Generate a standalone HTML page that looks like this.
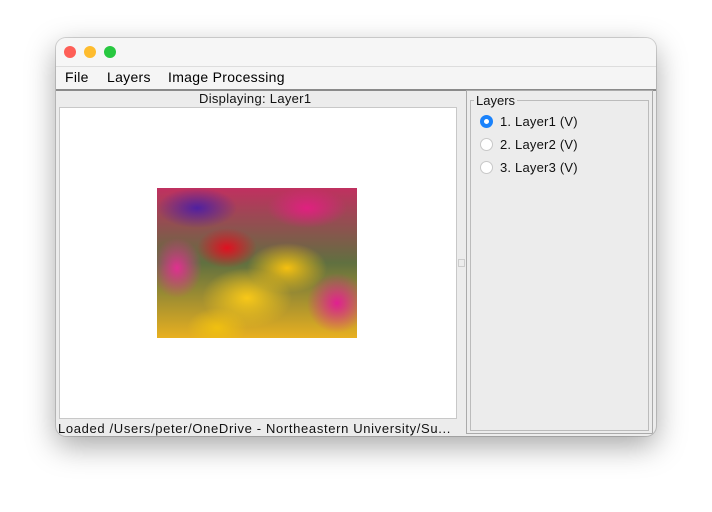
<!DOCTYPE html>
<html><head><style>
body{margin:0;width:712px;height:512px;background:#fff;font-family:"Liberation Sans",sans-serif;position:relative;overflow:hidden}
.win{position:absolute;left:56px;top:38px;width:600px;height:398px;border-radius:10px;background:#ececec;box-shadow:0 10px 30px rgba(0,0,0,.35),0 0 0 1px rgba(0,0,0,.15);overflow:hidden}
.title{position:absolute;left:0;top:0;width:600px;height:28px;background:#f6f6f6}
.dot{position:absolute;top:8px;width:12px;height:12px;border-radius:50%}
.menu{position:absolute;top:28px;left:0;width:600px;height:22px;background:#f5f5f5;border-top:1px solid #ddd;border-bottom:2px solid #8a8a8a;font-size:14px;letter-spacing:.3px}
.menu span{position:absolute;top:2px}
.t{position:absolute;font-size:13px;color:#111;white-space:nowrap}
.img{position:absolute;left:101px;top:150px;width:200px;height:150px;background:
radial-gradient(ellipse 30px 20px at 70px 60px,#e01020,transparent),
radial-gradient(ellipse 40px 25px at 130px 80px,#f5c010,transparent),
radial-gradient(ellipse 45px 30px at 90px 110px,#f8c818,transparent),
radial-gradient(ellipse 30px 30px at 180px 115px,#e02090,transparent),
radial-gradient(ellipse 25px 30px at 20px 80px,#e03090,transparent),
radial-gradient(ellipse 40px 20px at 150px 20px,#e02080,transparent),
radial-gradient(ellipse 40px 20px at 40px 20px,#5020a0,transparent),
radial-gradient(ellipse 30px 20px at 60px 140px,#f0c010,transparent),
linear-gradient(#c03060,#607040 50%,#e8b020)}
.radio{position:absolute;left:424px;width:13px;height:13px;border-radius:50%;background:#fff;border:1px solid #c8c8c8;box-sizing:border-box}
</style></head><body>
<div class="win">
<div class="title"></div>
<div class="dot" style="left:8px;background:#fe5f57"></div>
<div class="dot" style="left:28px;background:#febc2e"></div>
<div class="dot" style="left:48px;background:#28c840"></div>
<div class="menu"><span style="left:9px">File</span><span style="left:51px">Layers</span><span style="left:112px">Image Processing</span></div>
<div class="t" style="left:143px;top:53px;letter-spacing:.3px">Displaying: Layer1</div>
<div style="position:absolute;left:3px;top:69px;width:396px;height:310px;background:#fff;border:1px solid #c8c8c8"></div>
<div class="img"></div>
<div class="t" style="left:2px;top:383px;letter-spacing:.65px">Loaded /Users/peter/OneDrive - Northeastern University/Su...</div>
<div style="position:absolute;left:402px;top:221px;width:5px;height:6px;border:1px solid #ccc"></div>
<div style="position:absolute;left:410px;top:52px;width:187px;height:344px;border:1px solid #aaa;box-sizing:border-box"></div>
<div style="position:absolute;left:414px;top:62px;width:179px;height:331px;border:1px solid #bbb;box-sizing:border-box"></div>
<div class="t" style="left:418px;top:55px;background:#ececec;padding:0 2px">Layers</div>
<div class="radio" style="top:77px;border:4px solid #1a82fb"></div>
<div class="t" style="left:444px;top:76px;letter-spacing:.2px">1. Layer1 (V)</div>
<div class="radio" style="top:100px"></div>
<div class="t" style="left:444px;top:99px;letter-spacing:.2px">2. Layer2 (V)</div>
<div class="radio" style="top:123px"></div>
<div class="t" style="left:444px;top:122px;letter-spacing:.2px">3. Layer3 (V)</div>
</div>
</body></html>
